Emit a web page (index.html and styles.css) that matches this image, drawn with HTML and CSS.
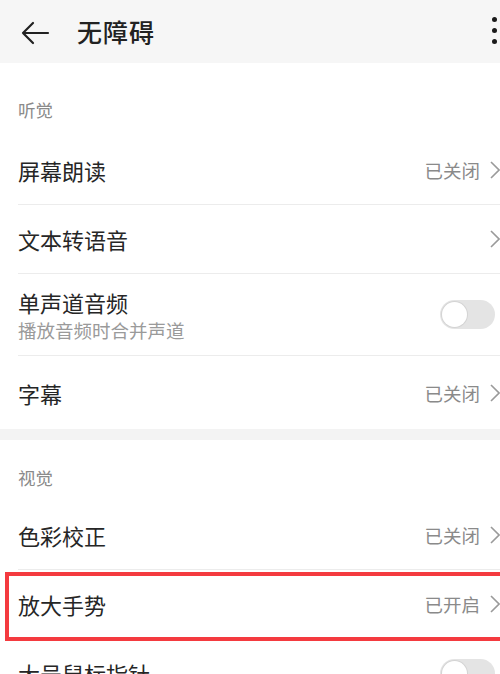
FILE: index.html
```html
<!DOCTYPE html>
<html lang="zh">
<head>
<meta charset="utf-8">
<link rel="stylesheet" href="styles.css">
</head>
<body>
<div class="app">
  <header class="appbar">
    <svg class="back" width="30" height="24" viewBox="0 0 30 24"><path d="M28 12H3M13 2L3 12l10 10" fill="none" stroke="#222" stroke-width="2.2" stroke-linecap="round" stroke-linejoin="round"/></svg>
    <h1 class="title">无障碍</h1>
    <div class="kebab"><span></span><span></span><span></span></div>
  </header>

  <section class="group">
    <div class="group-head first">听觉</div>
    <div class="row"><div class="row-in"><span class="label">屏幕朗读</span><span class="value">已关闭</span><svg class="chev" width="12" height="20" viewBox="0 0 12 20"><path d="M2 2l8 8-8 8" fill="none" stroke="#9a9a9a" stroke-width="1.6"/></svg></div></div>
    <div class="row"><div class="row-in"><span class="label">文本转语音</span><svg class="chev" width="12" height="20" viewBox="0 0 12 20"><path d="M2 2l8 8-8 8" fill="none" stroke="#9a9a9a" stroke-width="1.6"/></svg></div></div>
    <div class="row tall"><div class="row-in"><div class="text"><span class="label">单声道音频</span><span class="sub">播放音频时合并声道</span></div><span class="toggle"></span></div></div>
    <div class="row last"><div class="row-in"><span class="label">字幕</span><span class="value">已关闭</span><svg class="chev" width="12" height="20" viewBox="0 0 12 20"><path d="M2 2l8 8-8 8" fill="none" stroke="#9a9a9a" stroke-width="1.6"/></svg></div></div>
  </section>

  <section class="group">
    <div class="group-head">视觉</div>
    <div class="row"><div class="row-in"><span class="label">色彩校正</span><span class="value">已关闭</span><svg class="chev" width="12" height="20" viewBox="0 0 12 20"><path d="M2 2l8 8-8 8" fill="none" stroke="#9a9a9a" stroke-width="1.6"/></svg></div></div>
    <div class="row highlight"><div class="row-in"><span class="label">放大手势</span><span class="value">已开启</span><svg class="chev" width="12" height="20" viewBox="0 0 12 20"><path d="M2 2l8 8-8 8" fill="none" stroke="#9a9a9a" stroke-width="1.6"/></svg></div></div>
    <div class="row"><div class="row-in"><span class="label">大号鼠标指针</span><span class="toggle"></span></div></div>
  </section>
</div>
</body>
</html>
```
FILE: styles.css
```css
* { box-sizing: border-box; }
html, body { margin: 0; padding: 0; }
body {
  width: 500px;
  height: 674px;
  overflow: hidden;
  background: #f3f3f3;
  font-family: "Noto Sans CJK SC", "Noto Sans", sans-serif;
  color: #222;
}
.appbar {
  height: 63px;
  background: #f6f6f6;
  display: flex;
  align-items: center;
  padding-left: 20px;
  position: relative;
}
.back { display: block; margin-top: 2px; }
.title {
  margin: 0 0 0 27px;
  font-size: 25px;
  font-weight: 500;
  line-height: 1;
  color: #222;
  letter-spacing: 1px;
}
.kebab {
  margin-left: auto;
  width: 16px;
  display: flex;
  flex-direction: column;
  align-items: center;
  gap: 6px;
  margin-right: -2px;
  margin-top: -3px;
}
.kebab span {
  width: 5px;
  height: 5px;
  border-radius: 50%;
  background: #1a1a1a;
}
.group {
  background: #fff;
}
.group + .group { margin-top: 11px; }
.group-head {
  height: 61px;
  padding: 27px 0 0 18px;
  font-size: 17.5px;
  line-height: 22px;
  color: #8a8a8a;
}
.group-head.first {
  height: 73px;
  padding-top: 36px;
}
.row {
  padding-left: 18px;
  position: relative;
}
.row-in {
  height: 69px;
  display: flex;
  align-items: center;
  border-bottom: 1px solid #ececec;
}
.row.tall .row-in { height: 82px; }
.row.last .row-in { height: 73px; border-bottom: none; }
.label {
  font-size: 22px;
  line-height: 28px;
  color: #262626;
}
.text {
  display: flex;
  flex-direction: column;
  padding-top: 4px;
}
.text .label { line-height: 27px; }
.sub {
  font-size: 18.5px;
  line-height: 28px;
  color: #9a9a9a;
}
.value {
  margin-left: auto;
  font-size: 18.5px;
  color: #8a8a8a;
  margin-right: 9px;
}
.chev { display: block; margin-left: auto; margin-right: -1px; }
.value + .chev { margin-left: 0; }
.toggle {
  margin-left: auto;
  margin-right: 5px;
  width: 55px;
  height: 29px;
  border-radius: 15px;
  background: #e4e4e4;
  position: relative;
}
.toggle::after {
  content: "";
  position: absolute;
  left: 2px;
  top: 2px;
  width: 25px;
  height: 25px;
  border-radius: 50%;
  background: #fff;
  box-shadow: 0 0 0 1px #d4d4d4;
}
.highlight::after {
  content: "";
  position: absolute;
  left: 5px;
  top: 2px;
  right: -10px;
  bottom: -2px;
  border: 4px solid #f43a3f;
}
```
